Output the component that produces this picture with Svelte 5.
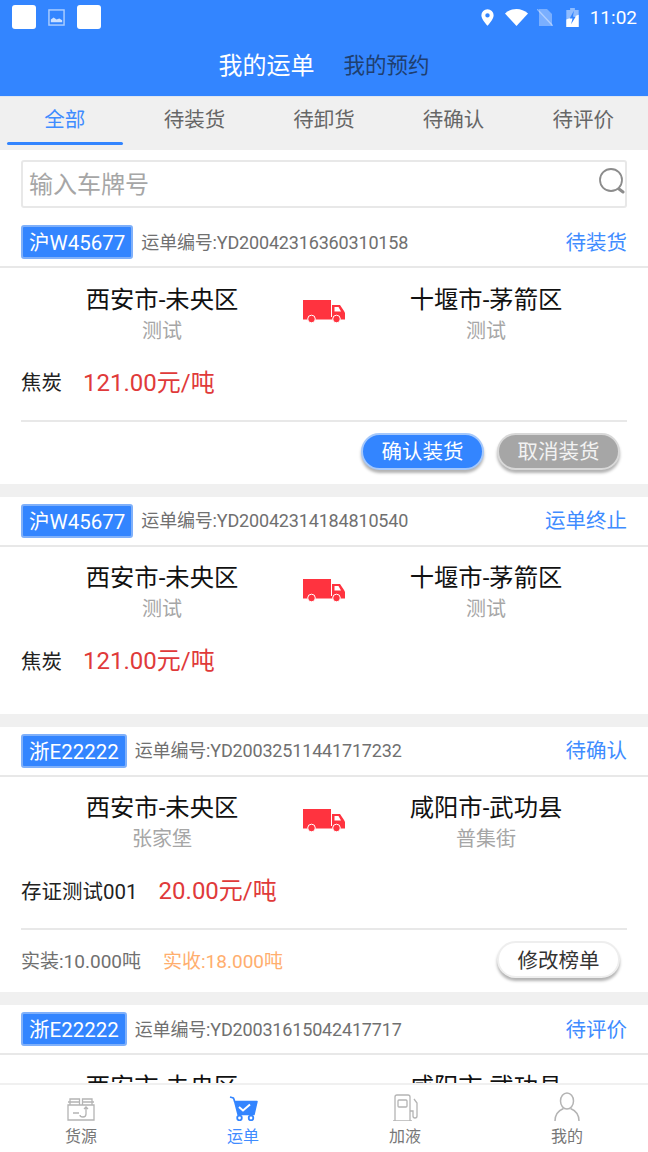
<script>
	const tabs = ['全部', '待装货', '待卸货', '待确认', '待评价'];

	const orders = [
		{
			plate: '沪W45677', no: 'YD20042316360310158', status: '待装货',
			from: '西安市-未央区', fromSub: '测试', to: '十堰市-茅箭区', toSub: '测试',
			goods: '焦炭', price: '121.00元/吨', kind: 'load'
		},
		{
			plate: '沪W45677', no: 'YD20042314184810540', status: '运单终止',
			from: '西安市-未央区', fromSub: '测试', to: '十堰市-茅箭区', toSub: '测试',
			goods: '焦炭', price: '121.00元/吨', kind: 'none'
		},
		{
			plate: '浙E22222', no: 'YD20032511441717232', status: '待确认',
			from: '西安市-未央区', fromSub: '张家堡', to: '咸阳市-武功县', toSub: '普集街',
			goods: '存证测试001', price: '20.00元/吨', kind: 'edit'
		},
		// only the top of this one shows above the bottom bar
		{
			plate: '浙E22222', no: 'YD20031615042417717', status: '待评价',
			from: '西安市-未央区', to: '咸阳市-武功县', kind: 'cut'
		}
	];
</script>

<div class="screen">
	<header class="top">
		<div class="status">
			<div class="status-left">
				<span class="note"></span>
				<svg width="17" height="17" viewBox="0 0 18 18">
					<rect x="1" y="1" width="16" height="16" fill="none" stroke="#fff" stroke-opacity=".6" stroke-width="1.500" />
					<path d="M3 14v-3l3-2 3 2 3-1 3 2v2z" fill="#fff" fill-opacity=".75" />
				</svg>
				<span class="note"></span>
			</div>
			<div class="status-right">
				<svg width="13" height="17" viewBox="0 0 14 18"><path fill-rule="evenodd" d="M7 0a6.600 6.600 0 0 1 6.600 6.600C13.600 11 7 18 7 18S.4 11 .4 6.600A6.600 6.600 0 0 1 7 0zm0 4.300a2.400 2.400 0 1 0 0 4.800 2.400 2.400 0 0 0 0-4.800z" fill="#fff" /></svg>
				<svg class="wifi" width="23" height="17" viewBox="0 0 23 17"><path d="M0 4.500C6.500-1.500 16.500-1.500 23 4.500L11.500 17z" fill="#fff" /></svg>
				<svg class="sim" width="16" height="17" viewBox="0 0 16 17"><path d="M2 0h8l5 5v12H2z" fill="#fff" fill-opacity=".35" /><path d="M0 0l16 17" stroke="#fff" stroke-opacity=".4" stroke-width="1.500" /></svg>
				<svg class="batt" width="13" height="19" viewBox="0 0 13 20"><path d="M4 0h5v2h4v18H0V2h4z" fill="#fff" fill-opacity=".45" /><path d="M0 12l13-5v13H0z" fill="#fff" /><path d="M8 3L3.500 11h3L5 17l5-8H7z" fill="#3385ff" /></svg>
				<span class="clock">11:02</span>
			</div>
		</div>
		<nav class="switch">
			<span class="switch-on">我的运单</span>
			<span class="switch-off">我的预约</span>
		</nav>
	</header>

	<div class="tabs">
		{#each tabs as tab, i}
			<div class="tab" class:active={i === 0}>{tab}</div>
		{/each}
	</div>

	<div class="search-row">
		<div class="search">
			<span class="placeholder">输入车牌号</span>
			<svg class="search-icon" width="26" height="26" viewBox="0 0 26 26">
				<circle cx="12" cy="12" r="11" fill="none" stroke="#8c8c8c" stroke-width="1.800" />
				<path d="M20 21l4 3" stroke="#8c8c8c" stroke-width="3" stroke-linecap="round" />
			</svg>
		</div>
	</div>

	<div class="list">
		{#each orders as o}
			<section class="card">
				<div class="card-head">
					<span class="plate">{o.plate}</span>
					<span class="order-no">运单编号:{o.no}</span>
					<span class="order-status">{o.status}</span>
				</div>
				<div class="route" class:cut={o.kind === 'cut'}>
					<div class="place">
						<div class="city">{o.from}</div>
						{#if o.fromSub}<div class="sub">{o.fromSub}</div>{/if}
					</div>
					{#if o.kind !== 'cut'}
						<svg class="truck" width="42" height="23" viewBox="0 0 42 23">
							<path d="M0 0h28v18H0z" fill="#ff333f" />
							<path fill-rule="evenodd" d="M29 5h8l4 6 1 2v6H29zM31.500 7v4.500H38L35.500 7z" fill="#ff333f" />
							<path d="M0 17h42v2.500H0z" fill="#ff333f" />
							<circle cx="8.500" cy="19" r="3.800" fill="#ff333f" stroke="#fff" />
							<circle cx="33.500" cy="19" r="3.800" fill="#ff333f" stroke="#fff" />
						</svg>
					{/if}
					<div class="place">
						<div class="city">{o.to}</div>
						{#if o.toSub}<div class="sub">{o.toSub}</div>{/if}
					</div>
				</div>
				{#if o.kind !== 'cut'}
					<div class="goods">
						<span class="goods-name">{o.goods}</span>
						<span class="price">{o.price}</span>
					</div>
				{/if}
				{#if o.kind === 'load'}
					<div class="actions">
						<button class="btn primary">确认装货</button>
						<button class="btn muted">取消装货</button>
					</div>
				{:else if o.kind === 'edit'}
					<div class="actions">
						<span class="weight">实装:10.000吨</span>
						<span class="weight orange">实收:18.000吨</span>
						<button class="btn plain">修改榜单</button>
					</div>
				{:else if o.kind === 'none'}
					<div class="spacer"></div>
				{/if}
			</section>
		{/each}
	</div>

	<footer class="bottom">
		<div class="nav-item">
			<svg width="30" height="30" viewBox="0 0 30 30" fill="none" stroke="#b4b4b4" stroke-width="1.300">
				<path d="M2 14h26v15H2zM4 14V8h9.500v6M16.500 14V8H26v6M2 11h11.500M16.500 11H28" />
				<path d="M7 22h6M20 16v7q0 3-3 3t-3-2M18 18l2-2 2 2" />
			</svg>
			<span>货源</span>
		</div>
		<div class="nav-item on">
			<svg width="30" height="30" viewBox="0 0 30 30">
				<path d="M2 6l3.500 1 1 3.500H29l-3 13H10L6 8" fill="#3385ff" stroke="#3385ff" stroke-width="1.500" stroke-linejoin="round" />
				<path d="M11 16l4 3.500 7-6" fill="none" stroke="#fff" stroke-width="2" />
				<circle cx="11.500" cy="27" r="2.300" fill="#fff" stroke="#3385ff" stroke-width="1.800" />
				<circle cx="23" cy="27" r="2.300" fill="#fff" stroke="#3385ff" stroke-width="1.800" />
			</svg>
			<span>运单</span>
		</div>
		<div class="nav-item">
			<svg width="30" height="30" viewBox="0 0 30 30" fill="none" stroke="#b4b4b4" stroke-width="1.300">
				<path d="M5 30V6q0-2 2-2h11q2 0 2 2v24M3 30h19" />
				<rect x="8" y="9" width="9" height="7" rx="1" />
				<path d="M20 20h3v5q0 2 2 2t2-2V12l-3-4" />
			</svg>
			<span>加液</span>
		</div>
		<div class="nav-item">
			<svg width="30" height="30" viewBox="0 0 30 30" fill="none" stroke="#b4b4b4" stroke-width="1.500">
				<ellipse cx="15" cy="10" rx="6.500" ry="8" />
				<path d="M3 30q0-9 8.500-12.500M27 30q0-9-8.500-12.500" />
			</svg>
			<span>我的</span>
		</div>
	</footer>
</div>

<style>
	:global(body) {
		background: #fff;
	}

	.screen {
		width: 648px;
		height: 1152px;
		display: flex;
		flex-direction: column;
		overflow: hidden;
		background: #fff;
		font-family: Roboto, "Noto Sans CJK SC", sans-serif;
	}

	.top {
		height: 96px;
		flex: none;
		background: #3385ff;
	}

	.status {
		height: 34px;
		display: flex;
		justify-content: space-between;
		align-items: center;
		padding: 0 11px 0 12px;
	}

	.status-left,
	.status-right {
		display: flex;
		align-items: center;
	}

	.status-left {
		gap: 12px;
	}

	.wifi {
		margin-left: 11px;
	}

	.sim {
		margin-left: 9px;
	}

	.batt {
		margin-left: 13px;
	}

	.note {
		width: 24px;
		height: 24px;
		border-radius: 3px;
		background: #fff;
	}

	.clock {
		color: #fff;
		font-size: 19px;
		margin-left: 11px;
	}

	.switch {
		height: 62px;
		box-sizing: border-box;
		padding-bottom: 3px;
		display: flex;
		justify-content: center;
		align-items: center;
		gap: 29px;
	}

	.switch-on {
		color: #fff;
		font-size: 24px;
	}

	.switch-off {
		color: #1f3f70;
		font-size: 21.500px;
	}

	.tabs {
		height: 54px;
		flex: none;
		display: flex;
		box-sizing: border-box;
		background: #f0f0f0;
		border-top: 1px solid #dfe6f0;
	}

	.tab {
		width: 129.600px;
		height: 48px;
		box-sizing: border-box;
		padding-bottom: 6px;
		display: flex;
		justify-content: center;
		align-items: center;
		color: #666;
		font-size: 20.500px;
	}

	.tab.active {
		color: #3f8cff;
		position: relative;
	}

	.tab.active::after {
		content: '';
		position: absolute;
		left: 7px;
		right: 7px;
		bottom: 0;
		height: 3px;
		border-radius: 2px;
		background: #3385ff;
	}

	.search-row {
		flex: none;
		height: 68px;
		box-sizing: border-box;
		padding: 10px 21px 0;
	}

	.search {
		height: 48px;
		box-sizing: border-box;
		display: flex;
		justify-content: space-between;
		align-items: center;
		padding: 0 0 0 6px;
		border: 2px solid #e8e8e8;
		border-radius: 3px;
	}

	.placeholder {
		color: #a6a6a6;
		font-size: 24px;
		padding-bottom: 3px;
	}

	.search-icon {
		margin-bottom: 7px;
	}

	.list {
		flex: 1;
		min-height: 0;
		overflow: hidden;
	}

	.card {
		border-bottom: 13px solid #f0f0f0;
	}

	.card-head {
		height: 50px;
		box-sizing: border-box;
		display: flex;
		align-items: center;
		padding: 0 21px;
		border-bottom: 2px solid #e8e8e8;
		white-space: nowrap;
	}

	.plate {
		box-sizing: border-box;
		height: 34px;
		padding: 0 6px 2px;
		display: flex;
		align-items: center;
		color: #fff;
		font-size: 20.500px;
		background: #3385ff;
		border: 2px solid #7fb0fa;
		border-radius: 3px;
		margin-right: 8px;
	}

	.order-no {
		color: #707070;
		font-size: 18px;
		letter-spacing: -0.17px;
		padding-bottom: 3px;
	}

	.order-status {
		margin-left: auto;
		color: #3f8cff;
		font-size: 20.500px;
		padding-bottom: 3px;
	}

	.route {
		display: flex;
		align-items: center;
		height: 87px;
		padding-top: 7px;
		box-sizing: border-box;
	}

	.route.cut {
		align-items: flex-start;
		padding-top: 17px;
	}

	.place {
		flex: none;
		width: 50%;
		text-align: center;
		line-height: 30px;
	}

	.city {
		color: #111;
		font-size: 24.300px;
	}

	.sub {
		color: #a6a6a6;
		font-size: 20px;
		margin-top: 1px;
	}

	/* sits across the seam between the two halves, centered on the page */
	.truck {
		flex: none;
		margin: 0 -21px 7px;
	}

	.goods {
		height: 50px;
		display: flex;
		align-items: center;
		gap: 21px;
		padding: 0 21px;
	}

	.goods-name {
		color: #222;
		font-size: 20.500px;
		margin-top: 2px;
	}

	.price {
		color: #e03a3a;
		font-size: 24px;
	}

	.actions {
		margin: 14.500px 21px 0;
		height: 64px;
		box-sizing: border-box;
		display: flex;
		align-items: center;
		justify-content: flex-end;
		gap: 13px;
		padding: 0 7px 3px 0;
		border-top: 2px solid #e8e8e8;
	}

	.btn {
		width: 123px;
		height: 37px;
		padding: 0 0 2px;
		border: 2px solid transparent;
		border-radius: 19px;
		font-family: inherit;
		font-size: 20.500px;
		box-shadow: 0 3px 3px rgba(0, 0, 0, 0.3);
	}

	.primary {
		color: #fff;
		background: #3385ff;
		border-color: #a5c8fb;
	}

	.muted {
		color: #f2f2f2;
		background: #a6a6a6;
		border-color: #d8d8d8;
	}

	.plain {
		color: #333;
		background: #fff;
		border-color: #eee;
		margin-left: auto;
	}

	.weight {
		color: #707070;
		font-size: 19px;
		margin-right: 9px;
	}

	.weight.orange {
		color: #ffae6e;
	}

	.spacer {
		height: 30px;
	}

	.bottom {
		height: 69px;
		flex: none;
		display: grid;
		grid-template-columns: repeat(4, 162px);
		background: #fff;
		border-top: 2px solid #f0f0f0;
		box-sizing: border-box;
	}

	.nav-item {
		display: flex;
		flex-direction: column;
		align-items: center;
		color: #777;
		font-size: 16px;
		line-height: 20px;
		padding-top: 6px;
	}

	.nav-item span {
		margin-top: 6px;
	}

	.nav-item.on {
		color: #3f8cff;
	}
</style>
